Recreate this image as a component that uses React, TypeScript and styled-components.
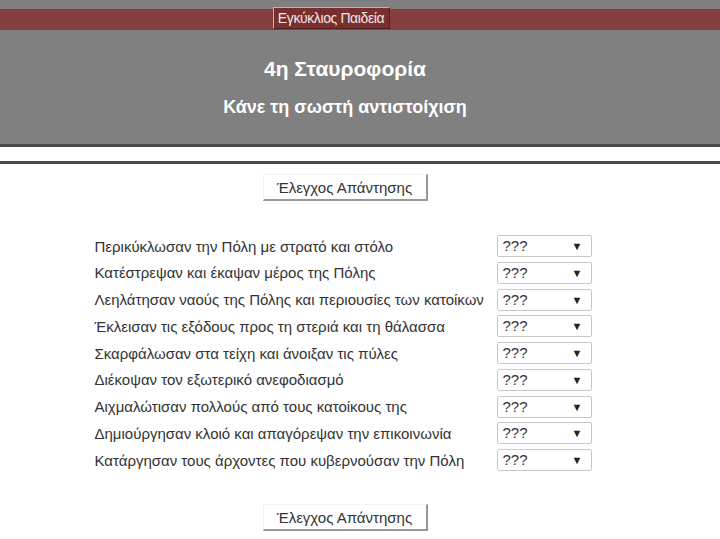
import React from "react";
import styled, { createGlobalStyle } from "styled-components";

const Global = createGlobalStyle`
  html, body { margin: 0; padding: 0; background: #fff; }
  body { font-family: "Liberation Sans", Arial, sans-serif; color: #333; }
`;

const TopStrip = styled.div`
  height: 9px;
  background: #7f7f7f;
`;

const NavBar = styled.div`
  height: 21px;
  background: #843e3e;
  display: flex;
  justify-content: center;
  padding-right: 58px;
`;

const NavButton = styled.div`
  margin-top: -2px;
  height: 22px;
  width: 117px;
  box-sizing: border-box;
  text-align: center;
  background: #7a2f2f;
  border: 1px solid #d9a6a6;
  border-right-color: #5a2020;
  border-bottom-color: #5a2020;
  color: #f4e6e6;
  font-size: 14px;
  letter-spacing: -0.4px;
  line-height: 20px;
`;

const Header = styled.div`
  height: 114px;
  background: #808080;
  border-bottom: 3px solid #4a4a4a;
  display: flex;
  flex-direction: column;
  align-items: center;
  padding-right: 30px;
  color: #fff;
  font-weight: bold;
`;

const Title = styled.div`
  font-size: 21px;
  margin-top: 27px;
`;

const Subtitle = styled.div`
  font-size: 18px;
  margin-top: 16px;
`;

const Divider = styled.div`
  margin-top: 14px;
  height: 3px;
  background: #4a4a4a;
`;

const Content = styled.div`
  display: flex;
  flex-direction: column;
  align-items: center;
  padding-right: 30px;
`;

const CheckButton = styled.button<{ top: number }>`
  margin-top: ${({ top }) => top}px;
  width: 165px;
  height: 27px;
  background: #fff;
  border: none;
  border-right: 2px solid #999;
  border-bottom: 2px solid #999;
  border-top: 1px solid #f2f2f2;
  border-left: 1px solid #f2f2f2;
  font-family: "Liberation Sans", Arial, sans-serif;
  font-size: 15px;
  color: #333;
  padding: 0;
`;

const Table = styled.div`
  margin-top: 34px;
  margin-left: -4px;
  display: grid;
  grid-template-columns: 402px 95px;
  row-gap: 4.75px;
  align-items: center;
`;

const Label = styled.div`
  font-size: 15px;
  color: #333;
  white-space: nowrap;
`;

const SelectBox = styled.div`
  position: relative;
  height: 22px;
  box-sizing: border-box;
  border: 1px solid #c8c8c8;
  border-radius: 2px;
  background: #fff;
  font-size: 15px;
  color: #333;
  line-height: 20px;
  padding-left: 5px;
`;

const Arrow = styled.span`
  position: absolute;
  right: 8px;
  top: 0;
  font-size: 11px;
  color: #222;
`;

const rows = [
  "Περικύκλωσαν την Πόλη με στρατό και στόλο",
  "Κατέστρεψαν και έκαψαν μέρος της Πόλης",
  "Λεηλάτησαν ναούς της Πόλης και περιουσίες των κατοίκων",
  "Έκλεισαν τις εξόδους προς τη στεριά και τη θάλασσα",
  "Σκαρφάλωσαν στα τείχη και άνοιξαν τις πύλες",
  "Διέκοψαν τον εξωτερικό ανεφοδιασμό",
  "Αιχμαλώτισαν πολλούς από τους κατοίκους της",
  "Δημιούργησαν κλοιό και απαγόρεψαν την επικοινωνία",
  "Κατάργησαν τους άρχοντες που κυβερνούσαν την Πόλη",
];

export default function App() {
  return (
    <>
      <Global />
      <TopStrip />
      <NavBar>
        <NavButton>Εγκύκλιος Παιδεία</NavButton>
      </NavBar>
      <Header>
        <Title>4η Σταυροφορία</Title>
        <Subtitle>Κάνε τη σωστή αντιστοίχιση</Subtitle>
      </Header>
      <Divider />
      <Content>
        <CheckButton top={10}>Έλεγχος Απάντησης</CheckButton>
        <Table>
          {rows.map((r) => (
            <React.Fragment key={r}>
              <Label>{r}</Label>
              <SelectBox>
                ???
                <Arrow>▼</Arrow>
              </SelectBox>
            </React.Fragment>
          ))}
        </Table>
        <CheckButton top={33}>Έλεγχος Απάντησης</CheckButton>
      </Content>
    </>
  );
}
